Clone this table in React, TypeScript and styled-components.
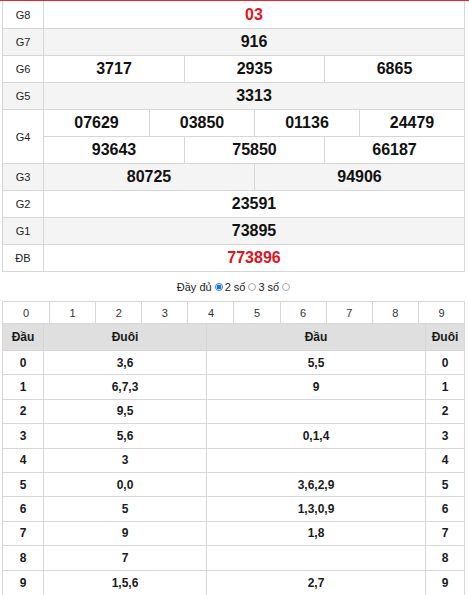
import React from "react";
import styled, { createGlobalStyle } from "styled-components";

const Global = createGlobalStyle`
  html, body { margin: 0; padding: 0; background: #fff; }
  body { font-family: "Liberation Sans", Arial, sans-serif; color: #111; }
`;

const BORDER = "#d6d6d6";

const Page = styled.div`
  width: 469px;
  border-top: 1px solid #e8262d;
  box-sizing: border-box;
`;

const Wrap = styled.div`
  padding-left: 2px;
`;

const PrizeTable = styled.div`
  width: 463px;
  box-sizing: border-box;
  border-left: 1px solid ${BORDER};
  border-right: 1px solid ${BORDER};
`;

const PrizeRow = styled.div<{ $alt?: boolean; $first?: boolean }>`
  display: flex;
  border-bottom: 1px solid ${BORDER};
  background: ${(p) => (p.$alt ? "#f4f4f4" : "#fff")};
`;

const Label = styled.div`
  width: 40px;
  flex: none;
  border-right: 1px solid ${BORDER};
  display: flex;
  align-items: center;
  justify-content: center;
  font-size: 11px;
  color: #222;
`;

const Values = styled.div`
  flex: 1;
  display: flex;
  flex-direction: column;
`;

const Line = styled.div<{ $cols: number; $tall?: boolean }>`
  display: grid;
  grid-template-columns: repeat(${(p) => p.$cols}, 1fr);
  height: ${(p) => (p.$tall ? 27 : 26)}px;
  & + & {
    border-top: 1px solid ${BORDER};
  }
`;

const Num = styled.div<{ $red?: boolean }>`
  display: flex;
  align-items: center;
  justify-content: center;
  font-size: 16px;
  font-weight: bold;
  color: ${(p) => (p.$red ? "#e3121b" : "#111")};
  & + & {
    border-left: 1px solid ${BORDER};
  }
`;

const Options = styled.div`
  height: 29px;
  display: flex;
  align-items: center;
  justify-content: center;
  font-size: 11px;
  color: #222;
  padding-right: 2px;
`;

const Radio = styled.span<{ $on?: boolean }>`
  display: inline-block;
  width: 8px;
  height: 8px;
  box-sizing: border-box;
  border-radius: 50%;
  margin: 0 2px 0 3px;
  border: 1px solid ${(p) => (p.$on ? "#2f7ae5" : "#a8a8a8")};
  background: ${(p) => (p.$on ? "radial-gradient(circle, #1a73e8 0 2.2px, #fff 2.6px)" : "#fff")};
`;

const Lower = styled.div`
  width: 463px;
  box-sizing: border-box;
  border: 1px solid ${BORDER};
  border-top: 1px solid ${BORDER};
`;

const DigitRow = styled.div`
  display: grid;
  grid-template-columns: repeat(10, 1fr);
  height: 22px;
  border-bottom: 1px solid ${BORDER};
  box-sizing: border-box;
`;

const Digit = styled.div`
  display: flex;
  align-items: center;
  justify-content: center;
  font-size: 11px;
  color: #333;
  & + & {
    border-left: 1px solid ${BORDER};
  }
`;

const Grid = styled.div<{ $head?: boolean }>`
  display: grid;
  grid-template-columns: 40px 163px 219px 1fr;
  height: ${(p) => (p.$head ? 27 : 24.4)}px;
  box-sizing: border-box;
  border-bottom: 1px solid ${BORDER};
  background: ${(p) => (p.$head ? "#dfdfdf" : "#fff")};
  &:last-child {
    border-bottom: none;
    height: 24px;
  }
`;

const Cell = styled.div`
  display: flex;
  align-items: center;
  justify-content: center;
  font-size: 12px;
  font-weight: bold;
  color: #1a1a1a;
  & + & {
    border-left: 1px solid ${BORDER};
  }
`;

type Prize = { label: string; lines: string[][]; alt?: boolean; red?: boolean };

const prizes: Prize[] = [
  { label: "G8", lines: [["03"]], red: true },
  { label: "G7", lines: [["916"]], alt: true },
  { label: "G6", lines: [["3717", "2935", "6865"]] },
  { label: "G5", lines: [["3313"]], alt: true },
  { label: "G4", lines: [["07629", "03850", "01136", "24479"], ["93643", "75850", "66187"]] },
  { label: "G3", lines: [["80725", "94906"]], alt: true },
  { label: "G2", lines: [["23591"]] },
  { label: "G1", lines: [["73895"]], alt: true },
  { label: "ĐB", lines: [["773896"]], red: true },
];

const loto: [string, string, string][] = [
  ["3,6", "5,5", "0"],
  ["6,7,3", "9", "1"],
  ["9,5", "", "2"],
  ["5,6", "0,1,4", "3"],
  ["3", "", "4"],
  ["0,0", "3,6,2,9", "5"],
  ["5", "1,3,0,9", "6"],
  ["9", "1,8", "7"],
  ["7", "", "8"],
  ["1,5,6", "2,7", "9"],
];

export default function App() {
  return (
    <Page>
      <Global />
      <Wrap>
        <PrizeTable>
          {prizes.map((p, i) => (
            <PrizeRow key={p.label} $alt={p.alt}>
              <Label>{p.label}</Label>
              <Values>
                {p.lines.map((line, j) => (
                  <Line key={j} $cols={line.length} $tall={i === 0}>
                    {line.map((n) => (
                      <Num key={n} $red={p.red}>
                        {n}
                      </Num>
                    ))}
                  </Line>
                ))}
              </Values>
            </PrizeRow>
          ))}
        </PrizeTable>
        <Options>
          Đầy đủ
          <Radio $on />
          2 số
          <Radio />
          3 số
          <Radio />
        </Options>
        <Lower>
          <DigitRow>
            {Array.from({ length: 10 }, (_, i) => (
              <Digit key={i}>{i}</Digit>
            ))}
          </DigitRow>
          <Grid $head>
            <Cell>Đầu</Cell>
            <Cell>Đuôi</Cell>
            <Cell>Đầu</Cell>
            <Cell>Đuôi</Cell>
          </Grid>
          {loto.map((r, i) => (
            <Grid key={i}>
              <Cell>{i}</Cell>
              <Cell>{r[0]}</Cell>
              <Cell>{r[1]}</Cell>
              <Cell>{r[2]}</Cell>
            </Grid>
          ))}
        </Lower>
      </Wrap>
    </Page>
  );
}
